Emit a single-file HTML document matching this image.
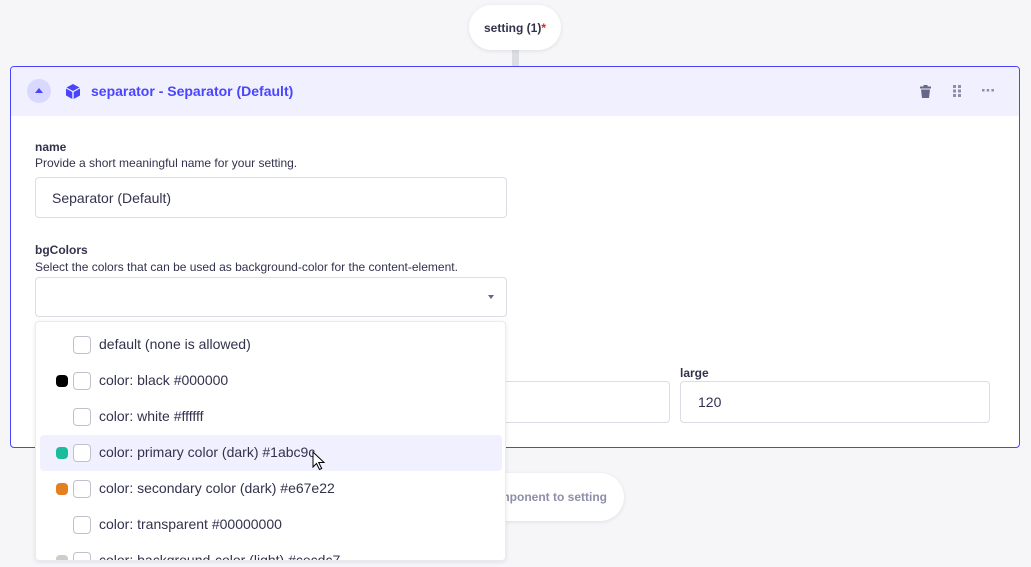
<!DOCTYPE html>
<html><head><meta charset="utf-8"><style>
*{box-sizing:border-box;margin:0;padding:0}
body{width:1031px;height:567px;background:#f6f6f9;font-family:"Liberation Sans",sans-serif;position:relative;overflow:hidden;color:#32324d}
.abs{position:absolute}
.pill{background:#fff;border-radius:24px;box-shadow:0 1px 4px rgba(33,33,52,.1);font-size:12px;font-weight:bold;display:flex;align-items:center;justify-content:center}
.card{left:10px;top:66px;width:1010px;height:382px;background:#fff;border:1px solid #4945ff;border-radius:4px;overflow:hidden}
.hdr{left:0;top:0;right:0;height:49px;background:#f0f0ff}
.lbl{font-size:12px;font-weight:bold;color:#32324d}
.hint{font-size:12px;color:#32324d}
.inp{border:1px solid #dcdce4;border-radius:4px;background:#fff;font-size:14px;display:flex;align-items:center;padding-left:16px}
.dd{left:35px;top:321px;width:471px;height:240px;background:#fff;border:1px solid #eaeaef;border-radius:4px;box-shadow:0 1px 4px rgba(33,33,52,.1);overflow:hidden}
.it{position:absolute;left:4px;width:462px;height:36px;border-radius:4px}
.it .cb{position:absolute;left:33px;top:9px;width:18px;height:18px;border:1px solid #c0c0cf;border-radius:4px;background:#fff}
.it .dot{position:absolute;left:16px;top:12px;width:12px;height:12px;border-radius:4px}
.it .t{position:absolute;left:59px;top:9px;font-size:14px;color:#32324d;white-space:nowrap}
</style></head><body>
<div class="abs" style="left:512px;top:48px;width:7px;height:20px;background:#dcdce4"></div>
<div class="abs pill" style="left:469px;top:5px;width:92px;height:45px;color:#32324d">setting (1)<span style="color:#d02b20">*</span></div>
<div class="abs pill" style="left:400px;top:473px;width:224px;height:48px;color:#8e8ea9;justify-content:flex-end;padding-right:17px">component to setting</div>

<div class="abs card">
 <div class="abs hdr">
  <div class="abs" style="left:16px;top:12px;width:24px;height:24px;border-radius:50%;background:#d9d8ff"></div>
  <div class="abs" style="left:24px;top:21px;width:0;height:0;border-left:4px solid transparent;border-right:4px solid transparent;border-bottom:5px solid #4945ff"></div>
  <svg class="abs" style="left:55px;top:17px" width="14" height="15" viewBox="0 0 14 15"><path d="M7 0L13.5 3.5 7 7 .5 3.5Z" fill="#4945ff"/><path d="M0 4.5L6.3 8v7L0 11.5Z" fill="#4945ff"/><path d="M14 4.5L7.7 8v7L14 11.5Z" fill="#4945ff"/></svg>
  <div class="abs" style="left:80px;top:16px;font-size:14px;font-weight:bold;color:#4945ff">separator - Separator (Default)</div>
  <svg class="abs" style="left:909px;top:18px" width="11" height="13" viewBox="0 0 11 13"><rect x="0" y="1.5" width="11" height="2" fill="#666687"/><rect x="3.5" y="0" width="4" height="2" fill="#666687"/><path d="M1 4.5h9l-1 8.5H2Z" fill="#666687"/></svg>
  <svg class="abs" style="left:942px;top:18px" width="8" height="12" viewBox="0 0 8 12"><g fill="#8e8ea9"><rect x="0" y="0" width="3" height="3"/><rect x="5" y="0" width="3" height="3"/><rect x="0" y="4.5" width="3" height="3"/><rect x="5" y="4.5" width="3" height="3"/><rect x="0" y="9" width="3" height="3"/><rect x="5" y="9" width="3" height="3"/></g></svg>
  <svg class="abs" style="left:971px;top:22px" width="12" height="3" viewBox="0 0 12 3"><g fill="#8e8ea9"><rect width="2.5" height="2.5"/><rect x="4.7" width="2.5" height="2.5"/><rect x="9.4" width="2.5" height="2.5"/></g></svg>
 </div>
 <div class="abs lbl" style="left:24px;top:73px">name</div>
 <div class="abs hint" style="left:24px;top:89px">Provide a short meaningful name for your setting.</div>
 <div class="abs inp" style="left:24px;top:110px;width:472px;height:41px">Separator (Default)</div>
 <div class="abs lbl" style="left:24px;top:176px">bgColors</div>
 <div class="abs hint" style="left:24px;top:193px">Select the colors that can be used as background-color for the content-element.</div>
 <div class="abs inp" style="left:24px;top:210px;width:472px;height:40px"></div>
 <div class="abs" style="left:477px;top:228px;width:0;height:0;border-left:3.5px solid transparent;border-right:3.5px solid transparent;border-top:4px solid #666687"></div>
 <div class="abs inp" style="left:300px;top:314px;width:359px;height:42px"></div>
 <div class="abs lbl" style="left:669px;top:299px">large</div>
 <div class="abs inp" style="left:669px;top:314px;width:310px;height:42px;padding-left:17px">120</div>
</div>

<div class="abs dd">
 <div class="it" style="top:5px"><div class="cb"></div><div class="t">default (none is allowed)</div></div>
 <div class="it" style="top:41px"><div class="dot" style="background:#000"></div><div class="cb"></div><div class="t">color: black #000000</div></div>
 <div class="it" style="top:77px"><div class="cb"></div><div class="t">color: white #ffffff</div></div>
 <div class="it" style="top:113px;background:#f0f0ff"><div class="dot" style="background:#1abc9c"></div><div class="cb"></div><div class="t">color: primary color (dark) #1abc9c</div></div>
 <div class="it" style="top:149px"><div class="dot" style="background:#e67e22"></div><div class="cb"></div><div class="t">color: secondary color (dark) #e67e22</div></div>
 <div class="it" style="top:185px"><div class="cb"></div><div class="t">color: transparent #00000000</div></div>
 <div class="it" style="top:221px"><div class="dot" style="background:#cecdc7"></div><div class="cb"></div><div class="t">color: background-color (light) #cecdc7</div></div>
</div>
<svg class="abs" style="left:312px;top:451px" width="14" height="20" viewBox="0 0 14 20"><path d="M1 1v15l3.5-3.5 3 6 2.2-1-3-6H12Z" fill="#fff" stroke="#000" stroke-width="1"/></svg>
</body></html>
